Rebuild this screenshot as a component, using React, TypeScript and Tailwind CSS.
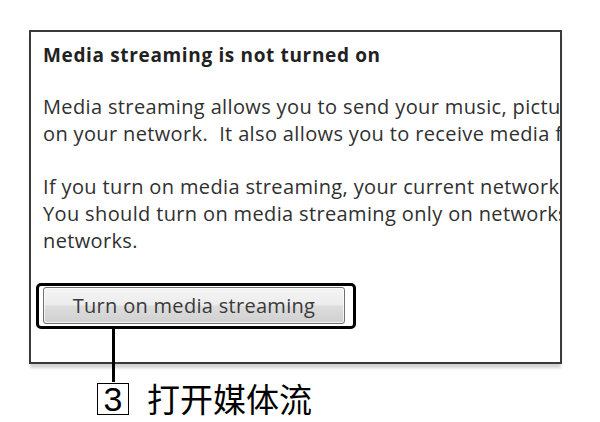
import React from "react";

export default function App() {
  const body = "font-['Open_Sans',sans-serif] text-[20px] leading-[27px] text-[#303030] whitespace-nowrap tracking-[0.36px]";
  return (
    <div className="relative w-[600px] h-[422px] bg-white overflow-hidden">
      <div className="ml-[29px] mt-[30px] w-[533px] h-[334px] border-2 border-[#3a3a3a] bg-white shadow-[0_5px_3px_-1px_rgba(0,0,0,0.18)] overflow-hidden pt-[10px] pl-[12px]">
        <div className="font-['Open_Sans',sans-serif] font-bold text-[19px] leading-[27px] text-[#222222] whitespace-nowrap tracking-[0.65px]">
          Media streaming is not turned on
        </div>
        <div className="mt-[24px]">
          <div className={body}>Media streaming allows you to send your music, pictures</div>
          <div className={body}>on your network.&nbsp; It also allows you to receive media from</div>
        </div>
        <div className="mt-[26px]">
          <div className={body}>If you turn on media streaming, your current network</div>
          <div className={body}>You should turn on media streaming only on networks</div>
          <div className={body}>networks.</div>
        </div>
        <div className="mt-[33px] w-[302px] h-[37px] rounded-[3px] border border-[#707070] bg-[linear-gradient(to_bottom,#f5f5f5_0%,#ececec_48%,#dddddd_52%,#d0d0d0_100%)] shadow-[inset_0_0_0_1px_rgba(255,255,255,0.7)] flex items-center justify-center">
          <span className="font-['Open_Sans',sans-serif] text-[20px] text-[#3a3a3a] whitespace-nowrap tracking-[0.3px]">Turn on media streaming</span>
        </div>
      </div>

      {/* callout overlay */}
      <div className="absolute left-[36px] top-[283px] w-[320px] h-[46px] border-[3px] border-black rounded-[5px]" />
      <div className="absolute left-[112px] top-[329px] w-[3px] h-[53px] bg-black" />

      <div className="absolute left-[97px] top-[382px] flex items-center">
        <div className="w-[32px] h-[32px] border-[1.5px] border-black flex items-center justify-center font-['Liberation_Sans',sans-serif] text-[34px] leading-none text-black">
          3
        </div>
        <div className="ml-[18px] font-['Noto_Sans_CJK_SC',sans-serif] text-[33px] leading-[33px] text-black">
          打开媒体流
        </div>
      </div>
    </div>
  );
}
